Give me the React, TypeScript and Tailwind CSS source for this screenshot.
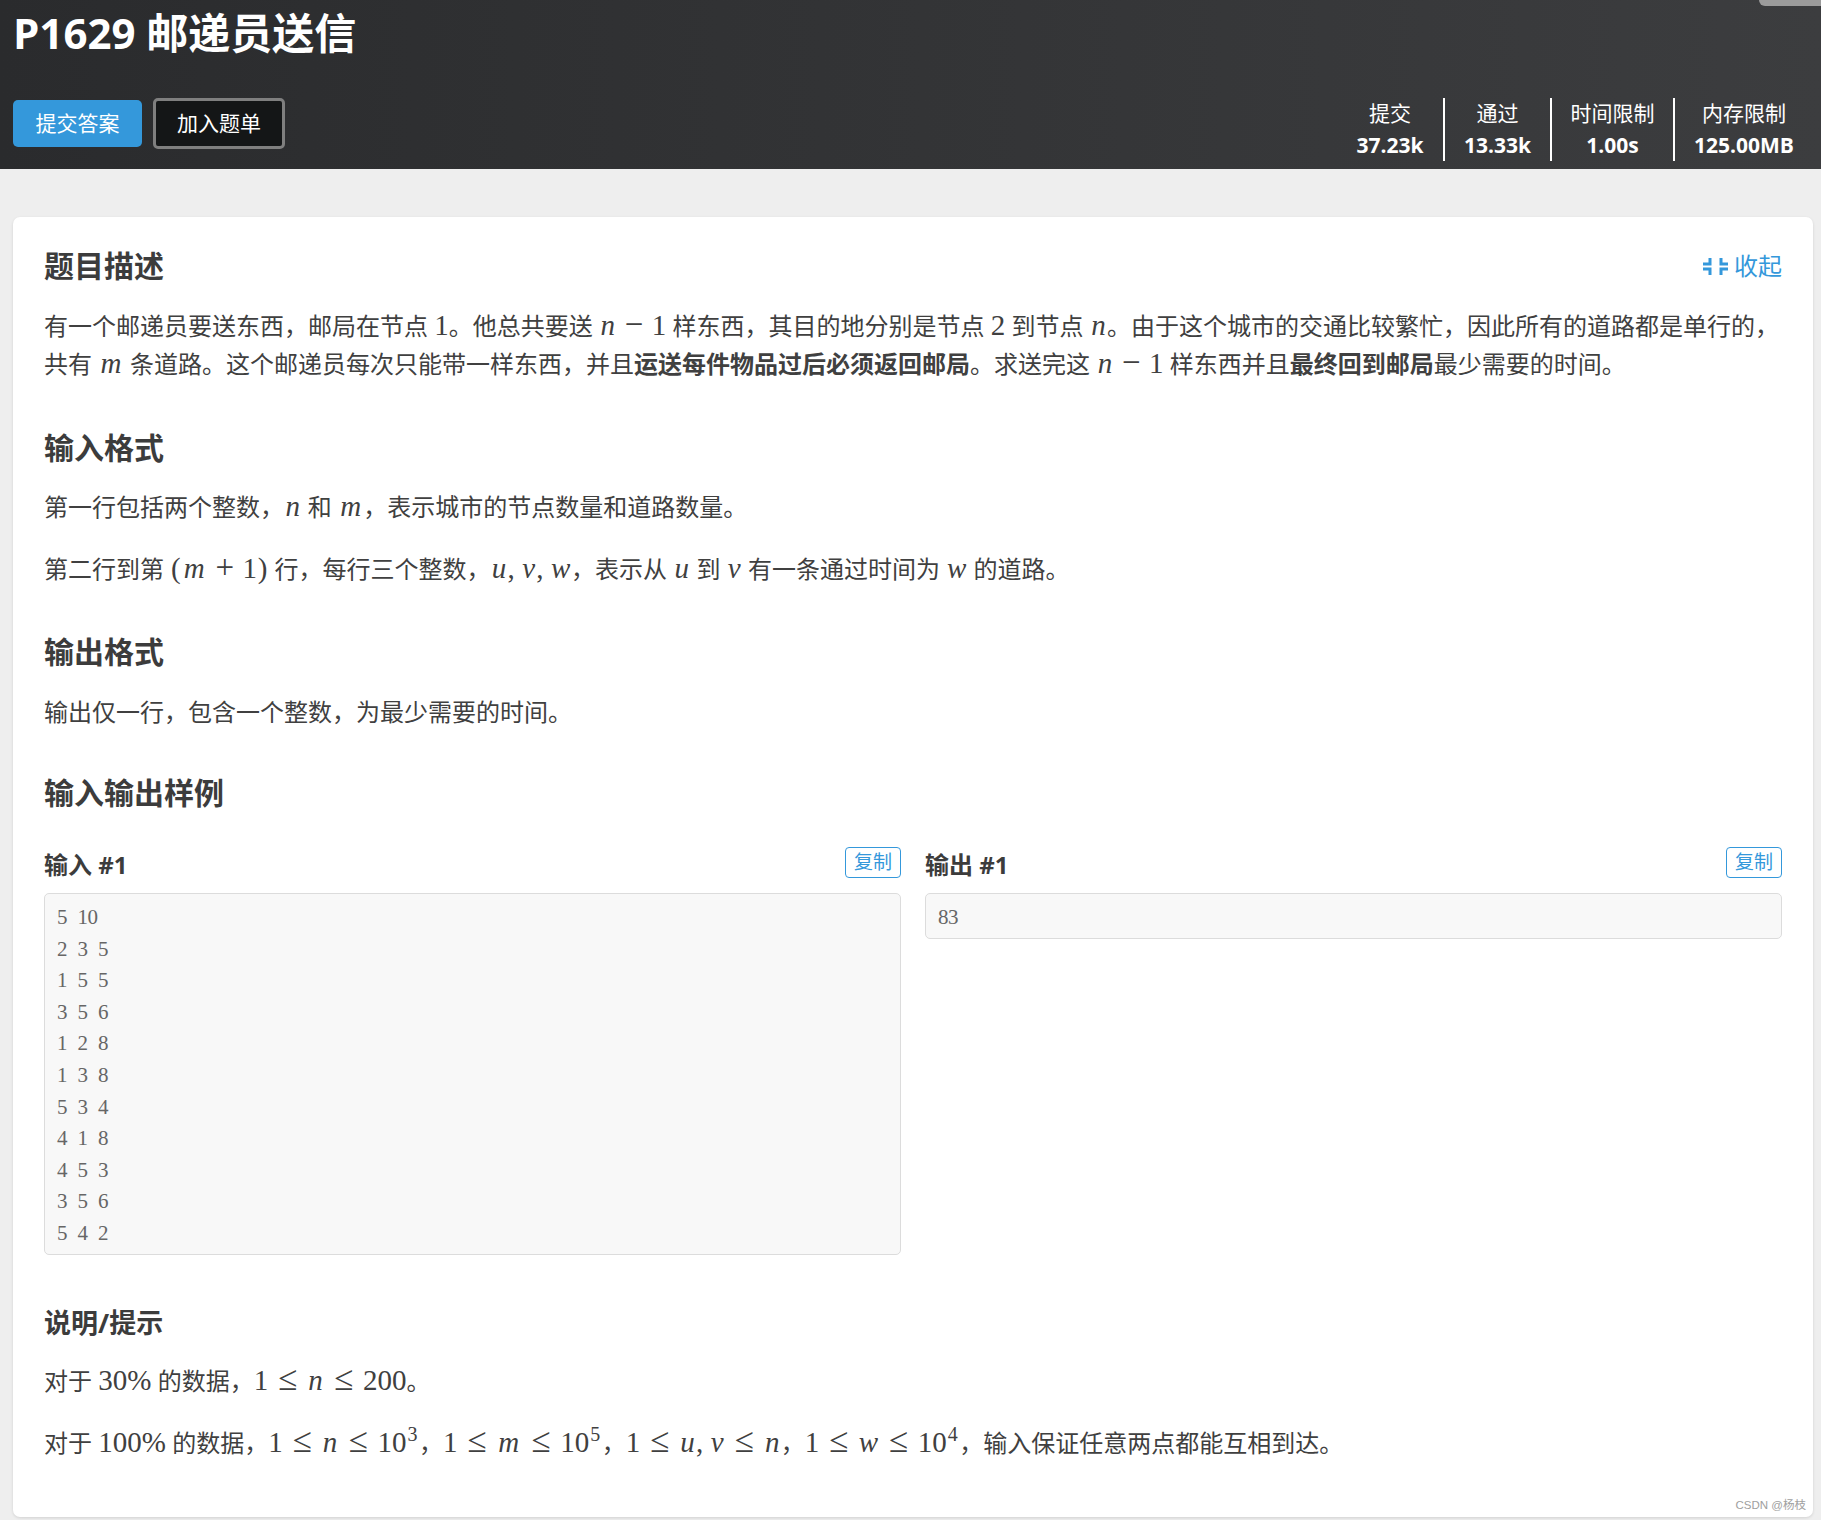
import React from "react";

const iw: Record<string, string> = {
  n: "w-[17.4px]",
  m: "w-[25.5px]",
  u: "w-[17px]",
  v: "w-[15px]",
  w: "w-[21px]",
};

const I = ({ c }: { c: string }) => (
  <span className={`italic inline-block text-center ${iw[c]}`}>{c}</span>
);

function M({ children }: { children: React.ReactNode }) {
  return <span className="font-['Liberation_Serif'] text-[29px] leading-none text-[#404040]">{children}</span>;
}
const Bin = ({ c }: { c: string }) => (
  <span className="inline-block w-[35.4px] text-center text-[33px] leading-none">{c}</span>
);
const Rel = ({ c }: { c: string }) => (
  <span className="inline-block w-[38.7px] text-center text-[35px] leading-none">{c}</span>
);
const Comma = () => <span className="inline-block w-[13.8px]">,</span>;
const Paren = ({ c }: { c: string }) => <span className="inline-block w-[11.3px] text-center">{c}</span>;
const Sup = ({ c }: { c: string }) => <sup className="static text-[20px] leading-none align-[11px] ml-[1px] mr-[1.5px]">{c}</sup>;

function Stat({ label, value, w, border }: { label: string; value: string; w: string; border?: boolean }) {
  return (
    <div className={`${w} h-[63px] flex flex-col items-center ${border ? "border-r-2 border-white" : ""}`}>
      <div className="text-[21px] leading-[31px]">{label}</div>
      <div className="text-[21px] leading-[32px] font-bold">{value}</div>
    </div>
  );
}

function H({ children }: { children: React.ReactNode }) {
  return <h2 className="text-[30px] leading-[42px] font-bold text-[#3c3c3c]">{children}</h2>;
}

function P({ children }: { children: React.ReactNode }) {
  return <p className="text-[24px] leading-[38.4px] text-[#404040]">{children}</p>;
}

function Sample({ title, lines }: { title: string; lines: string[] }) {
  return (
    <div className="flex-1 min-w-0">
      <div className="flex justify-between h-[46px]">
        <h3 className="text-[24px] leading-[34px] font-bold text-[#3c3c3c] mt-[1px]">{title}</h3>
        <button className="w-[56px] h-[31px] border border-[#3498db] rounded-[4px] text-[#3498db] text-[19px] leading-none">复制</button>
      </div>
      <pre className="border border-[#dcdcdc] rounded-[5px] bg-[#f8f8f8] pl-[12px] pr-[10px] pt-[8px] pb-[4px] font-['Liberation_Serif','Noto_Sans_CJK_SC',serif] text-[21px] tracking-[-0.5px] [word-spacing:5.75px] leading-[31.6px] text-[#666]">
        {lines.join("\n")}
      </pre>
    </div>
  );
}

export default function App() {
  return (
    <div className="w-[1821px] h-[1520px] overflow-hidden bg-[#eeeeee] font-['Open_Sans','Noto_Sans_CJK_SC',sans-serif] relative">
      <header className="h-[169px] bg-gradient-to-r from-[#2a2b2d] to-[#3c3d3f] text-white px-[13px] flex flex-col justify-between pb-[8px]">
        <h1 className="text-[42px] leading-[66px] font-bold">P1629 邮递员送信</h1>
        <div className="flex items-end justify-between">
          <div className="flex items-center gap-[11px] mb-[12px]">
            <button className="w-[129px] h-[47px] rounded-[5px] bg-[#3498db] text-[21px] text-white">提交答案</button>
            <button className="w-[132px] h-[51px] rounded-[5px] bg-[#141617] border-[3px] border-[#7f7f7f] text-[21px] text-white">加入题单</button>
          </div>
          <div className="flex items-start mr-[-5px]">
            <Stat label="提交" value="37.23k" w="w-[108px]" border />
            <Stat label="通过" value="13.33k" w="w-[107px]" border />
            <Stat label="时间限制" value="1.00s" w="w-[123px]" border />
            <Stat label="内存限制" value="125.00MB" w="w-[138px]" />
          </div>
        </div>
      </header>
      <div className="absolute top-0 right-0 w-[62px] h-[6px] bg-[#9b9b9b] rounded-bl-[8px]" />

      <main className="ml-[13px] mt-[48px] mr-[8px] h-[1300px] bg-white rounded-[7px] shadow-[0_1px_3px_rgba(0,0,0,0.12)] px-[31px] pt-[28px] relative">
        <div className="flex justify-between items-center">
          <H>题目描述</H>
          <span className="flex items-center gap-[6px] text-[24px] text-[#3498db]">
            <svg viewBox="0 0 25 17" className="w-[25px] h-[17px]" fill="currentColor">
              <path d="M0 4.5h5.5V0h3v7.5H0zM0 9.5h8.5V17h-3v-4.5H0zM25 4.5h-5.5V0h-3v7.5H25zM25 9.5h-8.5V17h3v-4.5H25z" />
            </svg>
            收起
          </span>
        </div>
        <div className="mt-[20px]">
          <P>
            有一个邮递员要送东西，邮局在节点 <M>1</M>。他总共要送 <M><I c="n" /><Bin c="−" />1</M> 样东西，其目的地分别是节点 <M>2</M> 到节点 <M><I c="n" /></M>。由于这个城市的交通比较繁忙，因此所有的道路都是单行的，共有 <M><I c="m" /></M> 条道路。这个邮递员每次只能带一样东西，并且<b>运送每件物品过后必须返回邮局</b>。求送完这 <M><I c="n" /><Bin c="−" />1</M> 样东西并且<b>最终回到邮局</b>最少需要的时间。
          </P>
        </div>
        <div className="mt-[43px]"><H>输入格式</H></div>
        <div className="mt-[19px]">
          <P>第一行包括两个整数，<M><I c="n" /></M> 和 <M><I c="m" /></M>，表示城市的节点数量和道路数量。</P>
        </div>
        <div className="mt-[24px]">
          <P>第二行到第 <M><Paren c="(" /><I c="m" /><Bin c="+" />1<Paren c=")" /></M> 行，每行三个整数，<M><I c="u" /><Comma /><I c="v" /><Comma /><I c="w" /></M>，表示从 <M><I c="u" /></M> 到 <M><I c="v" /></M> 有一条通过时间为 <M><I c="w" /></M> 的道路。</P>
        </div>
        <div className="mt-[42px]"><H>输出格式</H></div>
        <div className="mt-[20px]"><P>输出仅一行，包含一个整数，为最少需要的时间。</P></div>
        <div className="mt-[41px]"><H>输入输出样例</H></div>
        <div className="mt-[33px] flex gap-[24px]">
          <Sample title="输入 #1" lines={["5 10","2 3 5","1 5 5","3 5 6","1 2 8","1 3 8","5 3 4","4 1 8","4 5 3","3 5 6","5 4 2"]} />
          <Sample title="输出 #1" lines={["83"]} />
        </div>
        <h3 className="mt-[49px] text-[27px] leading-[38px] font-bold text-[#3c3c3c]">说明/提示</h3>
        <div className="mt-[19px]">
          <P>对于 <M>30%</M> 的数据，<M>1<Rel c="≤" /><I c="n" /><Rel c="≤" />200</M>。</P>
        </div>
        <div className="mt-[23px]">
          <P>对于 <M>100%</M> 的数据，<M>1<Rel c="≤" /><I c="n" /><Rel c="≤" />10<Sup c="3" /></M>，<M>1<Rel c="≤" /><I c="m" /><Rel c="≤" />10<Sup c="5" /></M>，<M>1<Rel c="≤" /><I c="u" /><Comma /><I c="v" /><Rel c="≤" /><I c="n" /></M>，<M>1<Rel c="≤" /><I c="w" /><Rel c="≤" />10<Sup c="4" /></M>，输入保证任意两点都能互相到达。</P>
        </div>
        <div className="absolute right-[7px] bottom-[3px] text-[11.5px] text-[#a0a0a0] font-['Liberation_Sans','Noto_Sans_CJK_SC',sans-serif]">CSDN @杨枝</div>
      </main>
    </div>
  );
}
